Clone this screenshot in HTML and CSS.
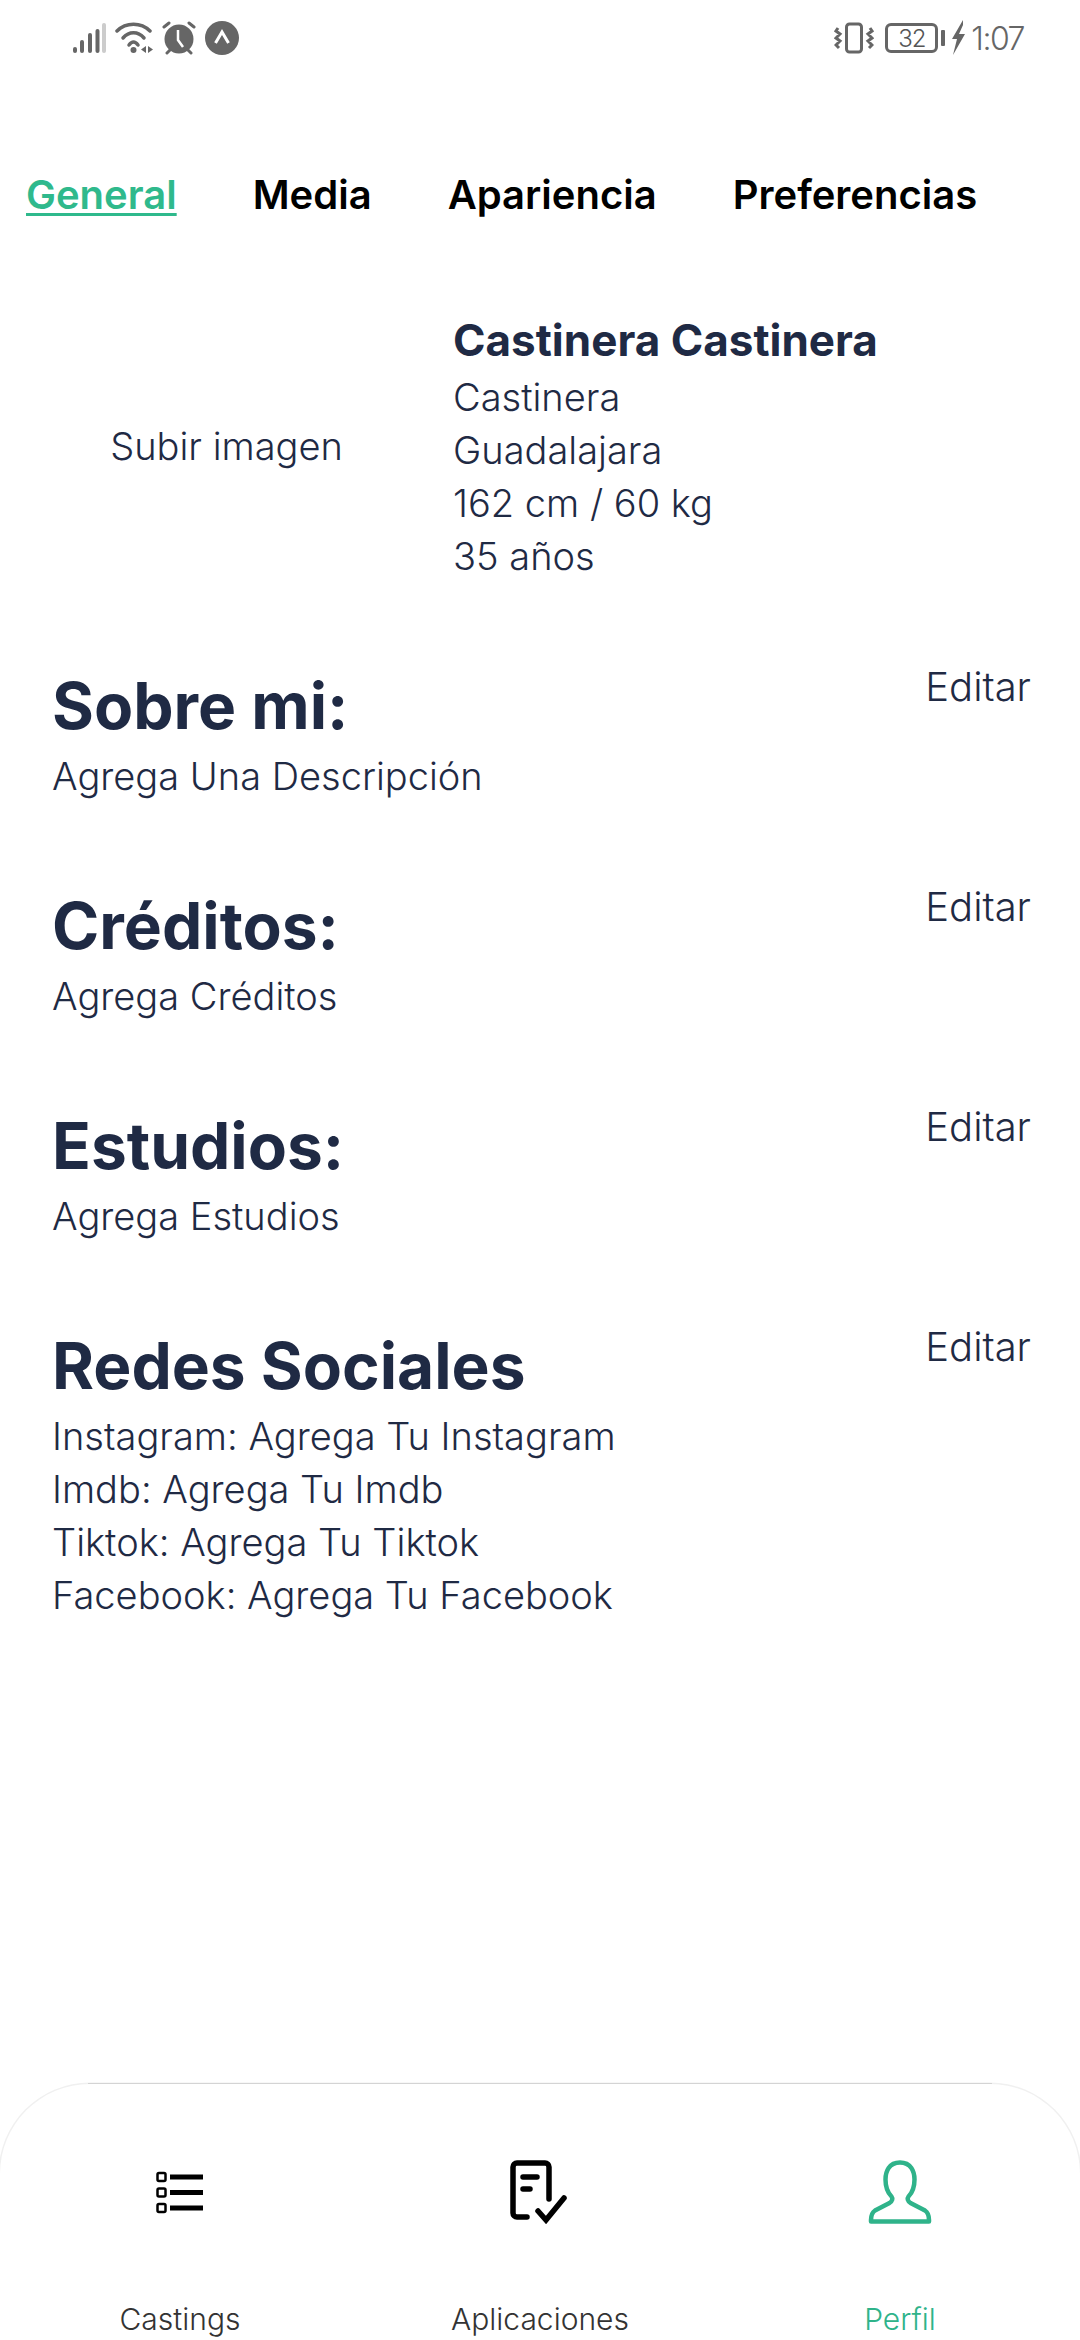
FILE: index.html
```html
<!DOCTYPE html>
<html lang="es">
<head>
<meta charset="utf-8">
<title>Perfil</title>
<link rel="stylesheet" href="styles.css">
</head>
<body>
<div class="screen">
  <header class="status">
    <div class="status-left">
      <svg class="ic-signal" width="34" height="32" viewBox="0 0 34 32"><g stroke-linecap="round" stroke-width="4" stroke="#666"><path d="M3 27v2"/><path d="M10 20v9"/><path d="M18 13v16"/></g><path d="M25.500 9v20" stroke="#666" stroke-width="4" stroke-linecap="round"/><path d="M32 3v26" stroke="#ccc" stroke-width="4" stroke-linecap="round"/></svg>
      <svg class="ic-wifi" width="38" height="34" viewBox="0 0 38 34"><g fill="none" stroke="#666" stroke-width="3.500" stroke-linecap="round"><path d="M2 10C11 1 26 1 35 10"/><path d="M8 17C14 10 23 10 29 17"/><path d="M14 24C17 20 20 20 23 24"/></g><circle cx="18.500" cy="29" r="3" fill="#666"/><path d="M31 25l-5 3.500 5 3.500zM33 25l5 3.500-5 3.500z" fill="#666"/></svg>
      <svg class="ic-alarm" width="34" height="34" viewBox="0 0 34 34"><circle cx="17" cy="18" r="14.500" fill="#666"/><path d="M16 9v10l5 7" fill="none" stroke="#fff" stroke-width="2.500"/><path d="M2 6l5-4M32 6l-5-4M5 32l3-3M29 32l-3-3" stroke="#666" stroke-width="3" stroke-linecap="round"/></svg>
      <svg class="ic-nav" width="34" height="34" viewBox="0 0 34 34"><circle cx="17" cy="17" r="17" fill="#666"/><path d="M10.500 22L17 11l6.500 11" fill="none" stroke="#fff" stroke-width="3"/></svg>
    </div>
    <div class="status-right">
      <svg class="ic-vib" width="40" height="32" viewBox="0 0 40 32"><rect x="12.500" y="2" width="15" height="28" rx="3" fill="none" stroke="#666" stroke-width="3"/><path d="M4 6l-2 3 4 3-4 4 4 3-4 4 3 3M36 6l2 3-4 3 4 4-4 3 4 4-3 3" fill="none" stroke="#666" stroke-width="3"/></svg>
      <div class="batt"><span class="batt-body">32</span><span class="batt-cap"></span></div>
      <svg class="ic-bolt" width="16" height="36" viewBox="0 0 16 36"><path d="M13 0L2 19h5L3 35l12-21H9l4-9z" fill="#666"/></svg>
      <span class="time">1:07</span>
    </div>
  </header>

  <nav class="tabs">
    <a class="tab tab-active">General</a>
    <a class="tab">Media</a>
    <a class="tab">Apariencia</a>
    <a class="tab">Preferencias</a>
  </nav>

  <section class="profile">
    <div class="upload">Subir imagen</div>
    <div class="who">
      <h2 class="who-name">Castinera Castinera</h2>
      <p>Castinera</p>
      <p>Guadalajara</p>
      <p>162 cm / 60 kg</p>
      <p>35 años</p>
    </div>
  </section>

  <section class="block block-first">
    <div class="block-main"><h1>Sobre mi:</h1><p>Agrega Una Descripción</p></div>
    <a class="edit">Editar</a>
  </section>
  <section class="block">
    <div class="block-main"><h1>Créditos:</h1><p>Agrega Créditos</p></div>
    <a class="edit">Editar</a>
  </section>
  <section class="block">
    <div class="block-main"><h1>Estudios:</h1><p>Agrega Estudios</p></div>
    <a class="edit">Editar</a>
  </section>
  <section class="block">
    <div class="block-main"><h1>Redes Sociales</h1><p>Instagram: Agrega Tu Instagram</p><p>Imdb: Agrega Tu Imdb</p><p>Tiktok: Agrega Tu Tiktok</p><p>Facebook: Agrega Tu Facebook</p></div>
    <a class="edit">Editar</a>
  </section>

  <footer class="bar">
    <div class="bar-item">
      <svg class="bar-ic bar-ic-list" width="50" height="48" viewBox="0 0 50 48"><g fill="none" stroke="#000" stroke-width="2.500"><rect x="2.500" y="3" width="8" height="8" rx="1.500"/><rect x="2.500" y="18.500" width="8" height="8" rx="1.500"/><rect x="2.500" y="34" width="8" height="8" rx="1.500"/></g><g stroke="#000" stroke-width="5"><path d="M15 7h33M15 22.500h33M15 38h33"/></g></svg>
      <span>Castings</span>
    </div>
    <div class="bar-item">
      <svg class="bar-ic" width="60" height="64" viewBox="0 0 60 64"><path d="M17 57H7a4 4 0 0 1-4-4V7a4 4 0 0 1 4-4h28a4 4 0 0 1 4 4v32" fill="none" stroke="#000" stroke-width="5.500" stroke-linecap="round"/><path d="M13 17h14M13 29h7" stroke="#000" stroke-width="5.500" stroke-linecap="round"/><path d="M28 51l8 9 18-22" fill="none" stroke="#000" stroke-width="5.500" stroke-linecap="round"/></svg>
      <span>Aplicaciones</span>
    </div>
    <div class="bar-item bar-active">
      <svg class="bar-ic" width="64" height="64" viewBox="0 0 64 64"><path d="M32 2.500c-11 0-14.500 9-14.500 17 0 7 2 13 6 17 1.500 2 1 4.500-2 6.500L7 50.500c-3 2-4 5-4 9.500v1.500h58V60c0-4.500-1-7.500-4-9.500L42.500 43c-3-2-3.500-4.500-2-6.500 4-4 6-10 6-17 0-8-3.500-17-14.500-17z" fill="none" stroke="#2fb38a" stroke-width="4.500" stroke-linejoin="round"/></svg>
      <span>Perfil</span>
    </div>
  </footer>
</div>
</body>
</html>
```
FILE: styles.css
```css
* { box-sizing: border-box; margin: 0; padding: 0; }
html, body { width: 1080px; height: 2340px; background: #fff; overflow: hidden; }
body { font-family: Inter, "Noto Sans", sans-serif; }
.screen { width: 1080px; height: 2340px; position: relative; display: flex; flex-direction: column; }

.status { height: 74px; padding: 20px 56px 0 72px; display: flex; justify-content: space-between; align-items: flex-start; }
.status-left { display: flex; align-items: center; gap: 9px; height: 36px; }
.status-right { display: flex; align-items: center; gap: 5px; height: 36px; }
.batt { display: flex; align-items: center; gap: 3px; margin-left: 6px; }
.batt-body { width: 53px; height: 30px; border: 3px solid #666; border-radius: 6px; font-size: 24px; font-weight: 300; color: #555; display: flex; align-items: center; justify-content: center; letter-spacing: -1px; }
.batt-cap { width: 4px; height: 16px; background: #666; border-radius: 1px; }
.time { font-size: 32px; font-weight: 300; color: #666; letter-spacing: -1.500px; }

.tabs { margin-top: 96px; padding-left: 26px; display: flex; gap: 76px; font-size: 40px; font-weight: 600; color: #000; }
.tab-active { color: #2fb98c; text-decoration: underline; text-underline-offset: 4px; text-decoration-thickness: 3px; }

.profile { margin-top: 90px; display: flex; align-items: center; }
.upload { width: 453px; text-align: center; font-size: 38px; font-weight: 300; color: #1f2a44; }
.who { font-size: 38px; font-weight: 300; line-height: 53px; color: #1f2a44; }
.who-name { font-size: 44px; font-weight: 700; line-height: 62px; }

.block { display: flex; justify-content: space-between; align-items: flex-start; padding: 0 49px 0 52px; margin-top: 79px; }
.block h1 { font-size: 64px; font-weight: 700; line-height: 88px; color: #1f2a44; }
.block p { font-size: 38px; font-weight: 300; line-height: 53px; color: #1f2a44; }
.edit { font-size: 40px; font-weight: 300; line-height: 53px; color: #1f2a44; margin-top: -2px; }

.bar { position: absolute; left: 0; right: 0; top: 2084px; height: 256px; box-shadow: 0 0 0 1.500px #f0f0f0; border-radius: 90px 90px 0 0; display: grid; grid-template-columns: repeat(3, 1fr); }
.bar::before { content: ""; position: absolute; top: -1.500px; left: 88px; right: 88px; height: 1.500px; background: #d4d4d4; }
.bar-item { display: flex; flex-direction: column; align-items: center; font-size: 30px; font-weight: 300; color: #333; position: relative; }
.bar-ic { position: absolute; top: 76px; }
.bar-ic-list { top: 86px; }
.bar-item span { position: absolute; top: 217px; }
.bar-active { color: #2fb38a; }
```
